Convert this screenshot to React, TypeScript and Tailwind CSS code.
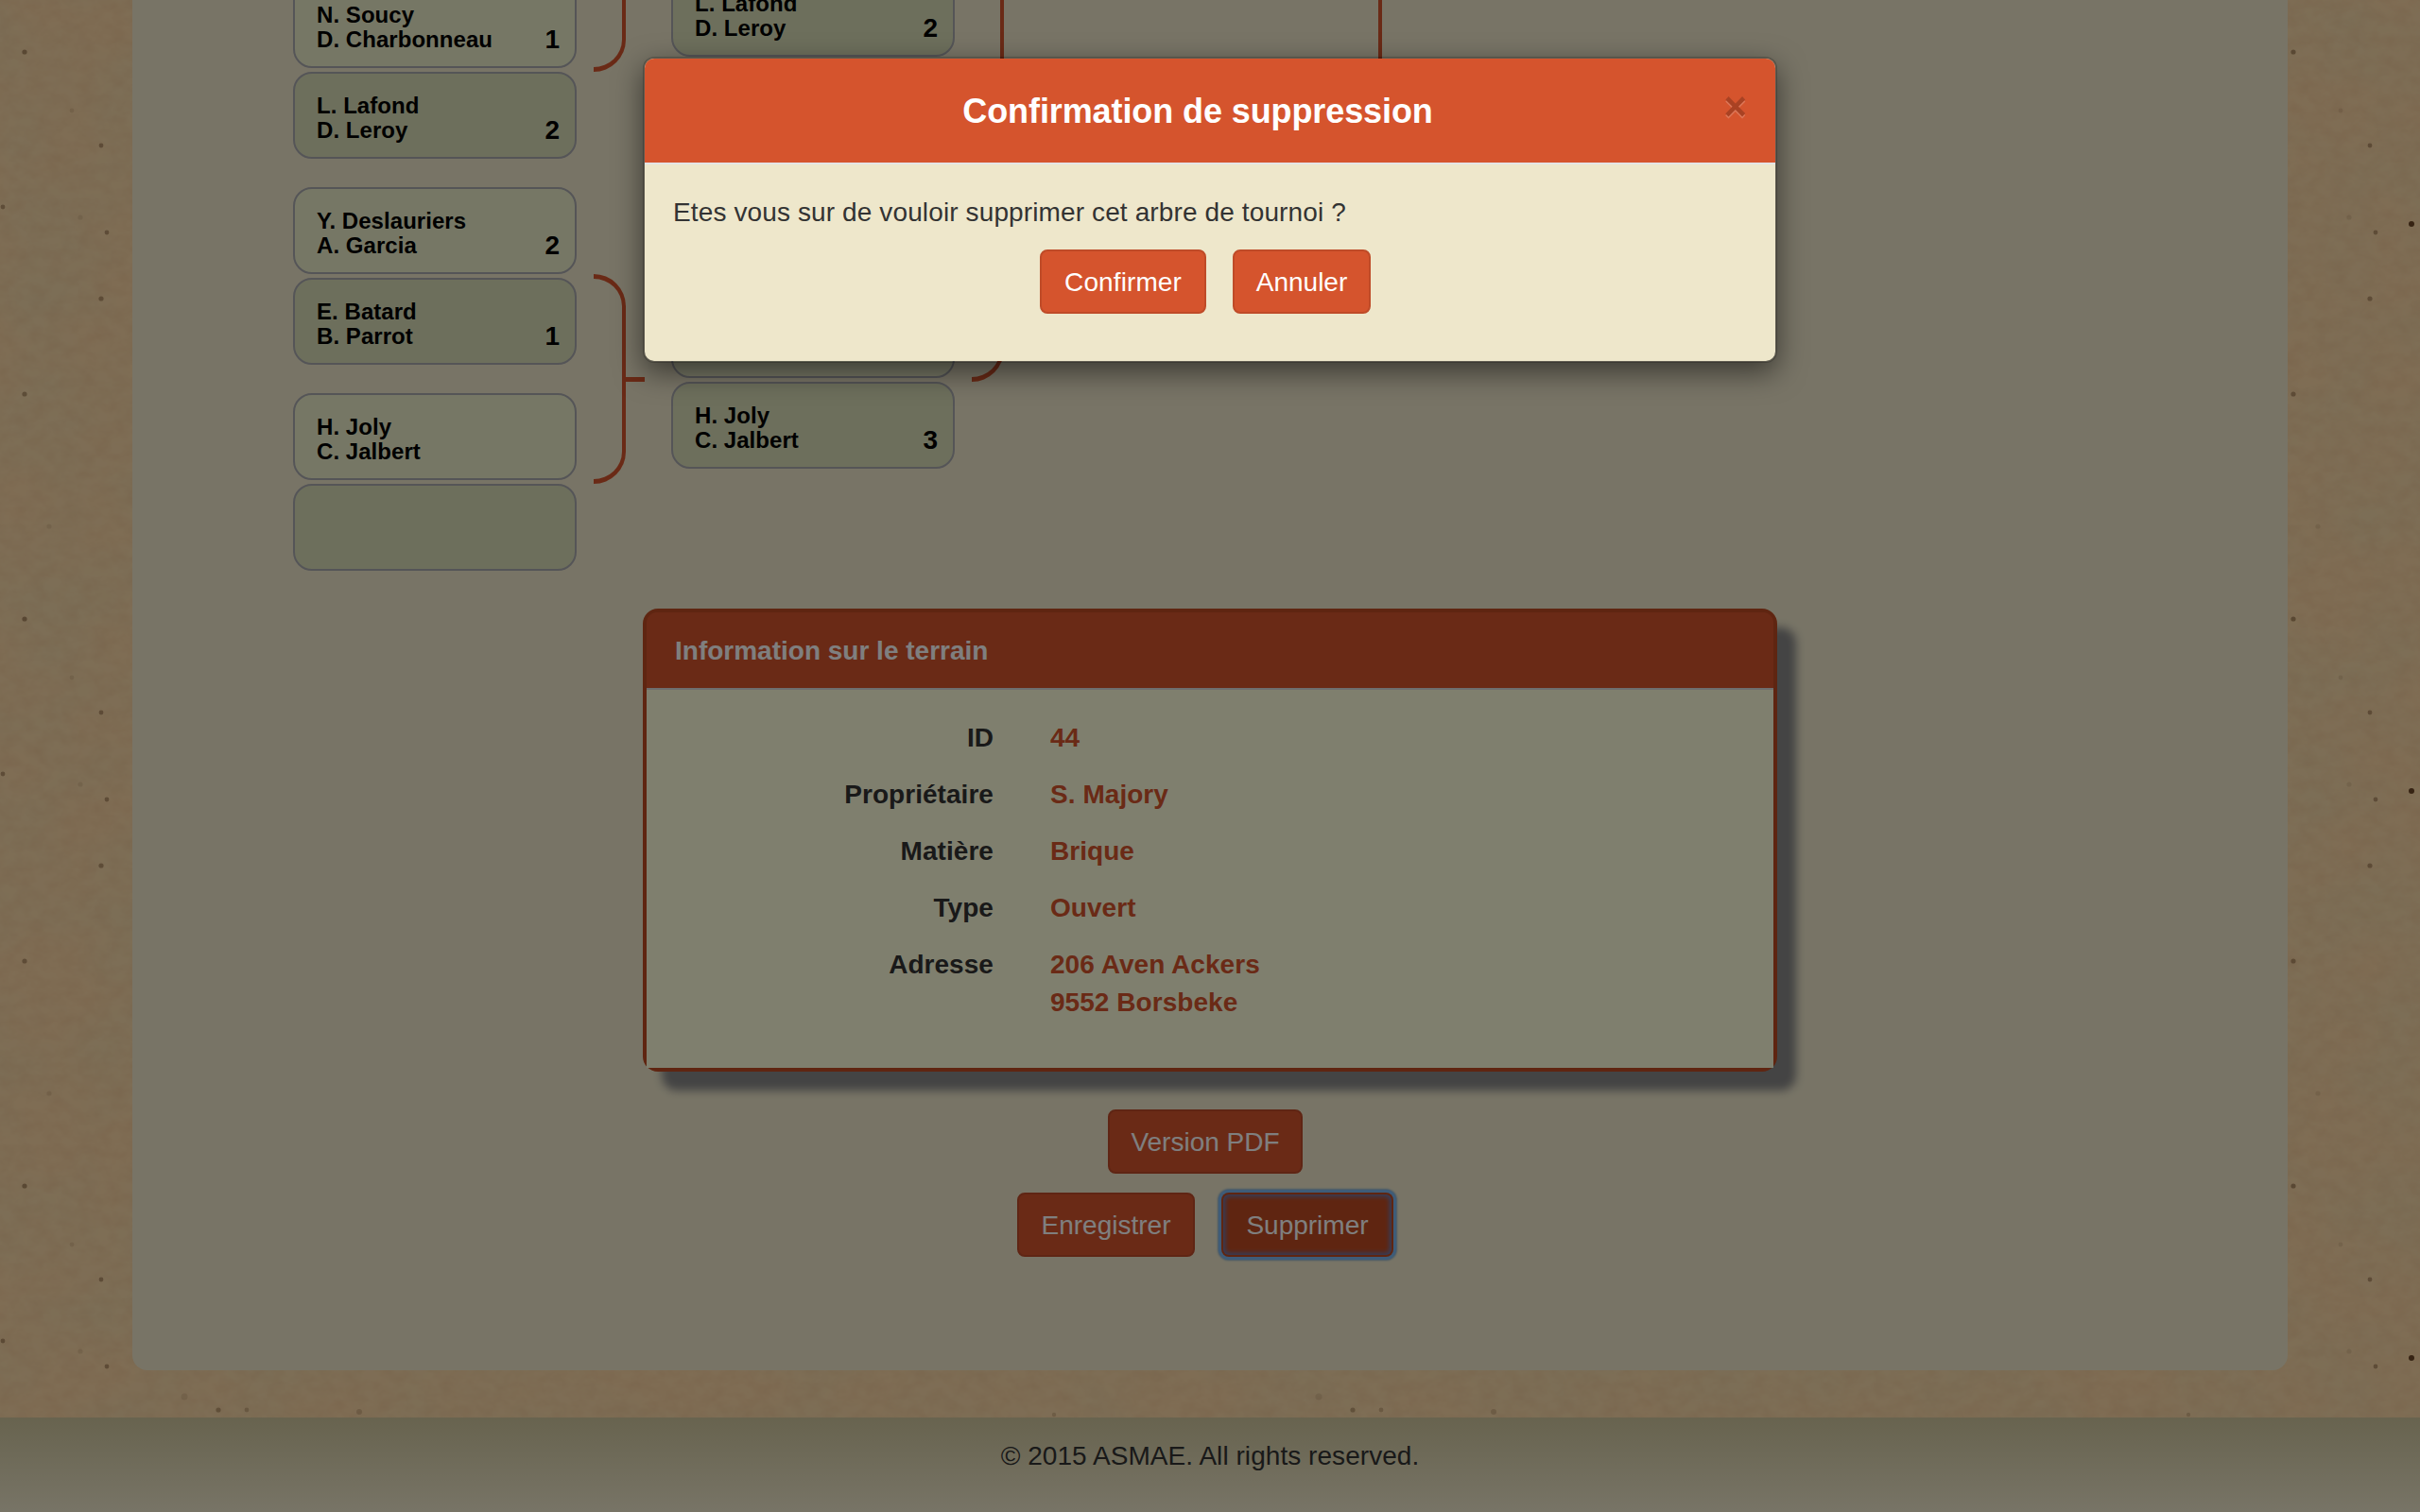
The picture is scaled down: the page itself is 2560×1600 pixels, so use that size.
import React from "react";

type Entry = { names: string[]; score?: string; dark?: boolean };

function PlayerCard({ names, score, dark }: Entry) {
  return (
    <div
      className={`flex h-[92px] w-[300px] items-end justify-between rounded-[20px] border-2 border-[#aaaaaf] pb-[15px] pl-[23px] pr-4 font-bold text-black ${
        dark ? "bg-[#dadeb8]" : "bg-[#ecefca]"
      }`}
    >
      <div className="text-[24px] leading-[26px] tracking-[0.05px]">
        {names.map((n) => (
          <div key={n} className="whitespace-nowrap">
            {n}
          </div>
        ))}
      </div>
      <div className="-mb-0.5 text-[28px] leading-[30px]">{score}</div>
    </div>
  );
}

function Match({ top, bottom }: { top: Entry; bottom: Entry }) {
  return (
    <div className="flex flex-col gap-1">
      <PlayerCard {...top} />
      <PlayerCard {...bottom} dark />
    </div>
  );
}

function Bracket({ height, tick = true }: { height: number; tick?: boolean }) {
  return (
    <div className="flex items-center" style={{ height }}>
      <div className="h-full w-[34px] rounded-r-[34px] border-y-5 border-r-4 border-[#d5542d]" />
      {tick && <div className="h-[5px] w-5 bg-[#d5542d]" />}
    </div>
  );
}

function Button({ children, className }: { children: React.ReactNode; className: string }) {
  return (
    <button
      className={`flex h-[68px] items-center justify-center rounded-lg border-2 pt-px text-[28px] leading-[40px] text-white ${className}`}
    >
      {children}
    </button>
  );
}

const specks: [number, number, number, number][] = [
  [26, 55, 2.6, 0.45],
  [107, 154, 2.4, 0.4],
  [3, 219, 2.4, 0.4],
  [113, 246, 2.4, 0.4],
  [107, 316, 2.6, 0.4],
  [26, 417, 2.6, 0.4],
  [151, 237, 3, 0.9],
  [195, 278, 3.5, 0.12],
  [231, 292, 2.6, 0.35],
  [261, 292, 2.4, 0.25],
  [380, 294, 3, 0.2],
  [85, 230, 2.6, 0.12],
  [76, 117, 2.4, 0.12],
  [52, 557, 2.6, 0.12],
  [1115, 297, 2.2, 0.2],
];

function Paper() {
  return (
    <svg className="absolute inset-0" width="2560" height="1600">
      <defs>
        <filter id="grain" x="0" y="0" width="100%" height="100%" colorInterpolationFilters="sRGB">
          <feTurbulence type="fractalNoise" baseFrequency="0.06 0.08" numOctaves="3" seed="7" />
          <feColorMatrix values="0 0 0 0 0.84  0 0 0 0 0.62  0 0 0 0 0.44  0.3 0 0 0 -0.09" />
        </filter>
        <filter id="blotch" x="0" y="0" width="100%" height="100%" colorInterpolationFilters="sRGB">
          <feTurbulence type="fractalNoise" baseFrequency="0.01 0.012" numOctaves="3" seed="3" />
          <feColorMatrix values="0 0 0 0 0.95  0 0 0 0 0.88  0 0 0 0 0.7  0 0.9 0 0 -0.25" />
        </filter>
        <pattern id="specks" width="1200" height="600" patternUnits="userSpaceOnUse">
          {specks.map(([x, y, r, o]) => (
            <circle key={`${x}-${y}`} cx={x} cy={y} r={r} fill="#5c3818" opacity={o} />
          ))}
        </pattern>
      </defs>
      <rect width="2560" height="1600" fill="#ffdaa8" />
      <rect width="2560" height="1600" filter="url(#blotch)" />
      <rect width="2560" height="1600" filter="url(#grain)" />
      <rect width="2560" height="1600" fill="url(#specks)" />
    </svg>
  );
}

const info: [string, string[]][] = [
  ["ID", ["44"]],
  ["Propriétaire", ["S. Majory"]],
  ["Matière", ["Brique"]],
  ["Type", ["Ouvert"]],
  ["Adresse", ["206 Aven Ackers", "9552 Borsbeke"]],
];

function TerrainPanel() {
  return (
    <section className="mx-auto h-[490px] w-[1200px] rounded-[16px] border-4 border-[#bf4b22] bg-[#bf4b22] shadow-[20px_20px_10px_#888888]">
      <h2 className="h-[82px] rounded-t-[11px] border-b-2 border-[#dddddd] bg-[#d5542d] pl-[30px] pt-[21px] text-[28px] font-bold leading-[40px] text-white">
        Information sur le terrain
      </h2>
      <dl className="flex h-[400px] flex-col gap-5 bg-[#ffffdd] pt-[31px] text-[28px] font-bold leading-[40px] tracking-[0.05px]">
        {info.map(([label, lines]) => (
          <div key={label} className="flex gap-[60px]">
            <dt className="w-[367px] text-right text-[#333333]">{label}</dt>
            <dd className="text-[#d5542d]">
              {lines.map((l) => (
                <div key={l}>{l}</div>
              ))}
            </dd>
          </div>
        ))}
      </dl>
    </section>
  );
}

function ConfirmModal() {
  return (
    <div className="absolute inset-0 flex items-start justify-center bg-black/50 pt-[60px]">
      <div className="h-[324px] w-[1200px] rounded-xl border-2 border-black/20 bg-[#eee7cb] bg-clip-padding shadow-[0_10px_30px_rgba(0,0,0,0.5)]">
        <header className="relative flex h-[112px] justify-center rounded-t-[10px] border-b-2 border-[#e5e5e5] bg-[#d5542d] pr-[26px] pt-[34px]">
          <h1 className="text-[36px] font-bold leading-[44px] tracking-[-0.1px] text-white">Confirmation de suppression</h1>
          <button className="absolute right-[30px] top-[30px] text-[42px] font-bold leading-[42px] text-black opacity-20 [text-shadow:0_2px_0_#fff]">
            ×
          </button>
        </header>
        <div className="px-[30px] pt-[31px] text-[28px] leading-[40px]">
          <p className="tracking-[0.12px] text-[#333333]">Etes vous sur de vouloir supprimer cet arbre de tournoi ?</p>
          <div className="mt-[19px] flex justify-center gap-7 pr-[10px]">
            <Button className="w-[176px] border-[#bf4b28] bg-[#d5542d] tracking-[0.1px]">Confirmer</Button>
            <Button className="w-[146px] border-[#bf4b28] bg-[#d5542d]">Annuler</Button>
          </div>
        </div>
      </div>
    </div>
  );
}

export default function App() {
  return (
    <div className="relative flex h-[1600px] w-[2560px] flex-col overflow-hidden font-['Liberation_Sans',Arial,sans-serif]">
      <Paper />
      <main className="relative mx-[140px] h-[1450px] rounded-b-[16px] bg-[#f0e9cd]">
        <div className="flex h-[604px] items-end pl-[170px]">
          <div className="flex flex-col gap-[30px]">
            <Match
              top={{ names: ["N. Soucy", "D. Charbonneau"], score: "1" }}
              bottom={{ names: ["L. Lafond", "D. Leroy"], score: "2" }}
            />
            <Match
              top={{ names: ["Y. Deslauriers", "A. Garcia"], score: "2" }}
              bottom={{ names: ["E. Batard", "B. Parrot"], score: "1" }}
            />
            <Match top={{ names: ["H. Joly", "C. Jalbert"] }} bottom={{ names: [] }} />
          </div>
          <div className="ml-[18px] flex flex-col gap-[214px] pb-[92px]">
            <Bracket height={222} />
            <Bracket height={222} />
          </div>
          <div className="ml-[28px] flex flex-col gap-[248px] pb-[108px]">
            <Match top={{ names: [] }} bottom={{ names: ["L. Lafond", "D. Leroy"], score: "2" }} />
            <Match top={{ names: [] }} bottom={{ names: ["H. Joly", "C. Jalbert"], score: "3" }} />
          </div>
          <div className="ml-[18px] pb-[200px]">
            <Bracket height={438} />
          </div>
          <div className="ml-[346px] pb-[400px]">
            <Bracket height={880} tick={false} />
          </div>
        </div>
        <div className="pt-10">
          <TerrainPanel />
        </div>
        <div className="mt-10 flex flex-col items-center gap-5 pr-[10px]">
          <Button className="w-[206px] border-[#bf4b28] bg-[#d5542d]">Version PDF</Button>
          <div className="flex gap-7">
            <Button className="w-[188px] border-[#bf4b28] bg-[#d5542d]">Enregistrer</Button>
            <Button className="w-[182px] border-transparent bg-[#bf4b22] shadow-[inset_0_0_5px_2px_#5f7fc4,0_0_0_3px_#7cb8f2,0_0_2px_4px_#8cb0cc]">
              Supprimer
            </Button>
          </div>
        </div>
      </main>
      <footer className="relative mt-[50px] h-[100px] bg-linear-to-b from-[#d0c79e] to-[#f0e9cd] pt-[21px] text-center text-[28px] leading-[40px] tracking-[0.05px] text-[#333333]">
        © 2015 ASMAE. All rights reserved.
      </footer>
      <ConfirmModal />
    </div>
  );
}
